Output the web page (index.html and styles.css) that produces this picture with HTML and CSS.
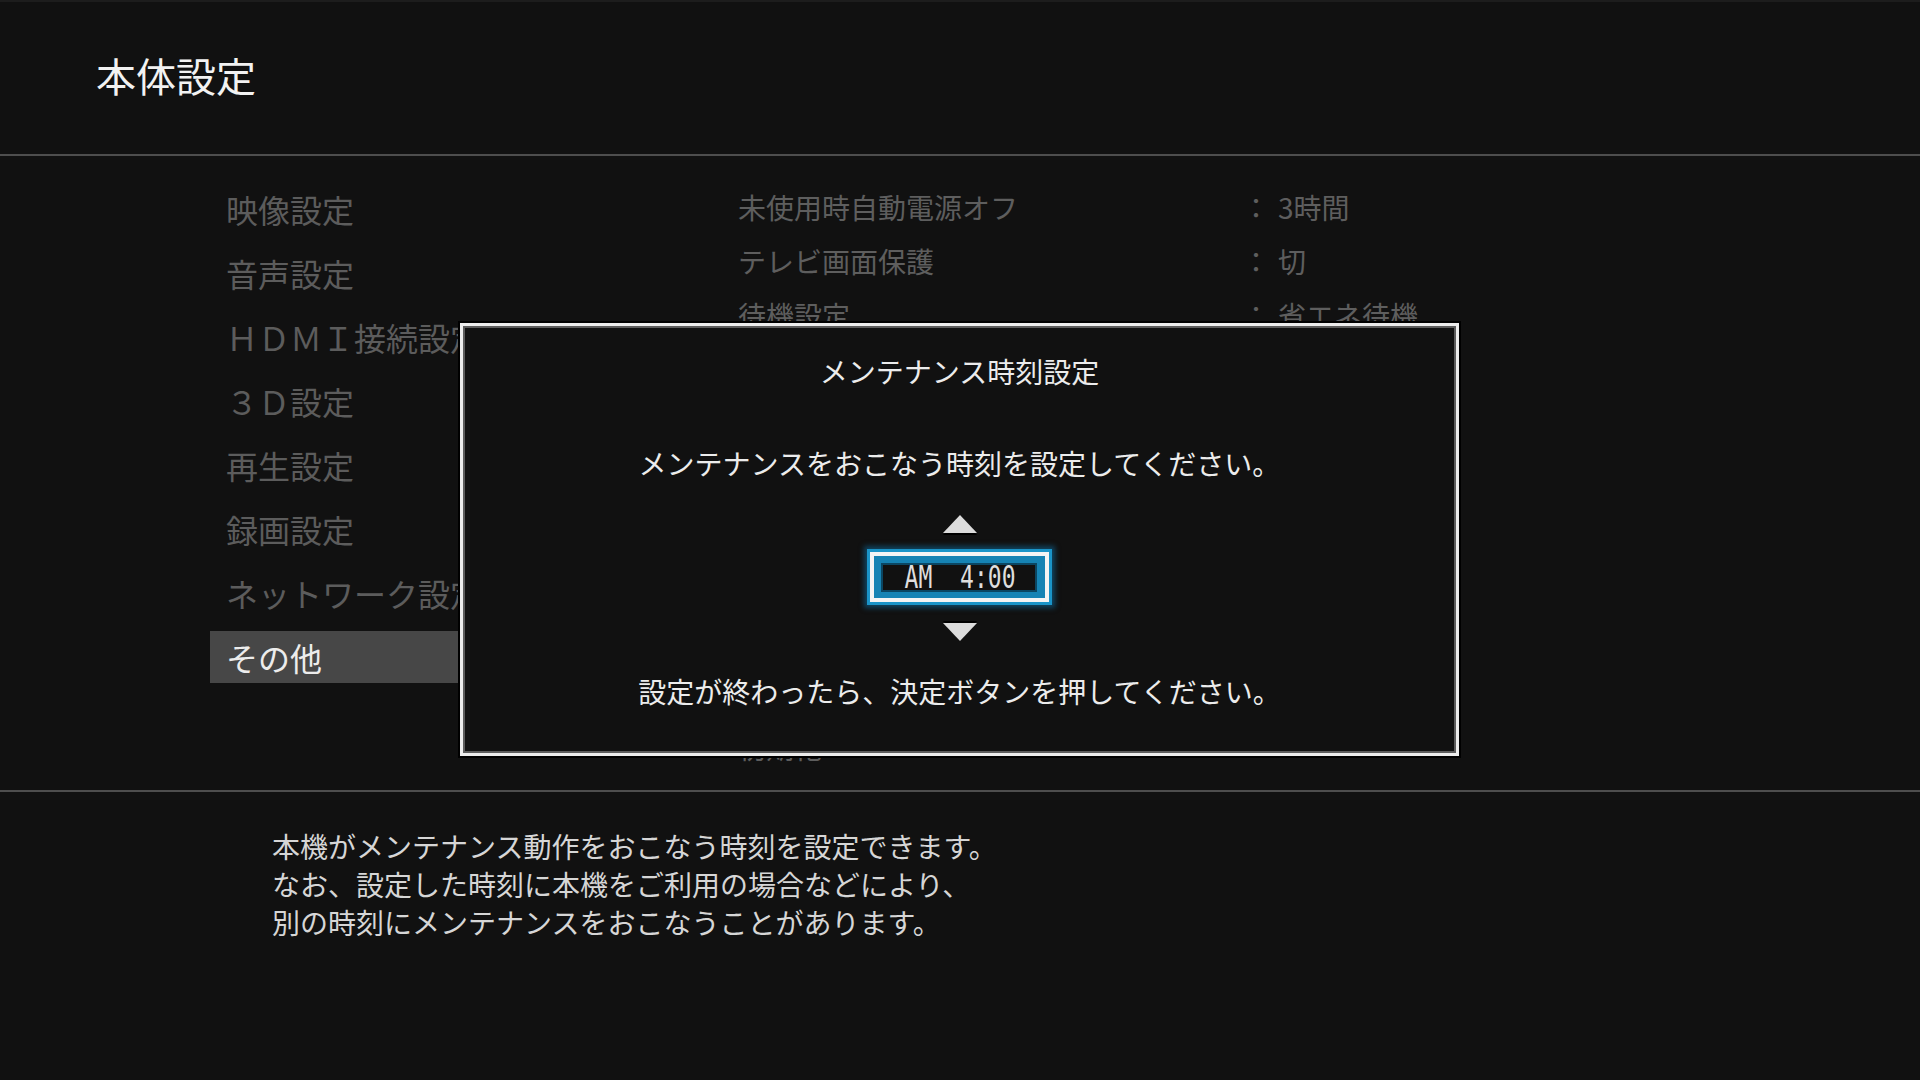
FILE: index.html
```html
<!DOCTYPE html>
<html lang="ja">
<head>
  <meta charset="UTF-8" />
  <title>本体設定</title>
  <link rel="stylesheet" href="styles.css">
</head>
<body>
  <div class="screen">
    <header class="header">
      <h1 class="title">本体設定</h1>
    </header>

    <main class="main">
      <ul class="menu">
        <li class="menu-item">映像設定</li>
        <li class="menu-item">音声設定</li>
        <li class="menu-item">ＨＤＭＩ接続設定</li>
        <li class="menu-item">３Ｄ設定</li>
        <li class="menu-item">再生設定</li>
        <li class="menu-item">録画設定</li>
        <li class="menu-item">ネットワーク設定</li>
        <li class="menu-item selected">その他</li>
      </ul>

      <div class="detail">
        <div class="row"><span class="row-label">未使用時自動電源オフ</span><span class="row-sep">：</span><span class="row-value">3時間</span></div>
        <div class="row"><span class="row-label">テレビ画面保護</span><span class="row-sep">：</span><span class="row-value">切</span></div>
        <div class="row"><span class="row-label">待機設定</span><span class="row-sep">：</span><span class="row-value">省エネ待機</span></div>
        <div class="row"><span class="row-label">メンテナンス時刻設定</span><span class="row-sep">：</span><span class="row-value">AM 4:00</span></div>
        <div class="row"><span class="row-label">ソフトウェア更新</span><span class="row-sep">：</span><span class="row-value">入</span></div>
        <div class="row"><span class="row-label">リモコン設定</span><span class="row-sep">：</span><span class="row-value">1</span></div>
        <div class="row"><span class="row-label">表示部の明るさ</span><span class="row-sep">：</span><span class="row-value">明</span></div>
        <div class="row"><span class="row-label">操作音</span><span class="row-sep">：</span><span class="row-value">入</span></div>
        <div class="row"><span class="row-label">機器情報</span></div>
        <div class="row"><span class="row-label">放送受信設定</span></div>
        <div class="row"><span class="row-label">初期化</span></div>
      </div>
    </main>

    <footer class="help">
      <p class="help-text">本機がメンテナンス動作をおこなう時刻を設定できます。<br>なお、設定した時刻に本機をご利用の場合などにより、<br>別の時刻にメンテナンスをおこなうことがあります。</p>
    </footer>

    <div class="dialog">
      <div class="dialog-title">メンテナンス時刻設定</div>
      <div class="dialog-msg">メンテナンスをおこなう時刻を設定してください。</div>

      <svg class="arrow arrow-up" width="36" height="20" viewBox="0 0 36 20">
        <polygon points="1,20 18,2 35,20" fill="#000" />
        <polygon points="1,18 18,0 35,18" fill="#dcdcdc" />
      </svg>

      <div class="time-box">
        <div class="time-inner"><span class="time-text">AM  4:00</span></div>
      </div>

      <svg class="arrow arrow-down" width="36" height="20" viewBox="0 0 36 20">
        <polygon points="1,0 18,18 35,0" fill="#000" />
        <polygon points="1,2 18,20 35,2" fill="#dcdcdc" />
      </svg>

      <div class="dialog-msg last">設定が終わったら、決定ボタンを押してください。</div>
    </div>
  </div>
</body>
</html>
```

FILE: styles.css
```css
body {
  margin: 0;
  background-color: #111;
  font-family: "Noto Sans CJK JP", "Noto Sans", sans-serif;
}

.screen {
  position: relative;
  width: 1920px;
  height: 1080px;
  overflow: hidden;
  background-color: #111;
}

.header {
  box-sizing: border-box;
  height: 156px;
  padding: 53px 0 0 96px;
  border-top: 2px solid #1d1d1d;
  border-bottom: 2px solid #4e4e4e;
}

.title {
  margin: 0;
  font-size: 40px;
  line-height: 40px;
  font-weight: normal;
  color: #f2f2f2;
}

.main {
  box-sizing: border-box;
  height: 636px;
  display: flex;
  gap: 58px;
  padding-left: 210px;
  border-bottom: 2px solid #4e4e4e;
}

.menu {
  list-style: none;
  margin: 0;
  padding: 27px 0 0 0;
  width: 470px;
  display: flex;
  flex-direction: column;
  gap: 12px;
}

.menu-item {
  height: 52px;
  padding-left: 16px;
  font-size: 32px;
  line-height: 52px;
  color: #5c5c5c;
  white-space: nowrap;
}

.menu-item.selected {
  background-color: #474747;
  color: #ececec;
}

.detail {
  padding-top: 24px;
}

.row {
  display: flex;
  height: 54px;
  font-size: 28px;
  line-height: 54px;
  color: #5e5e5e;
  white-space: nowrap;
}

.row-label { width: 504px; }
.row-sep { width: 36px; }

.help {
  padding: 35px 0 0 272px;
}

.help-text {
  margin: 0;
  font-size: 28px;
  line-height: 38px;
  color: #d6d6d6;
}

/* overlay dialog */
.dialog {
  position: absolute;
  left: 460px;
  top: 323px;
  box-sizing: border-box;
  width: 999px;
  height: 433px;
  padding-top: 24px;
  display: flex;
  flex-direction: column;
  align-items: center;
  background-color: #111;
  border: 3px solid #ececec;
  box-shadow: 0 0 0 2px #000, inset 0 0 0 2px #5c5c5c;
  color: #ececec;
}

.dialog-title {
  font-size: 28px;
  line-height: 42px;
}

.dialog-msg {
  margin-top: 50px;
  font-size: 28px;
  line-height: 42px;
}

.dialog-msg.last {
  margin-top: 29px;
}

.arrow { display: block; }
.arrow-up { margin-top: 31px; }
.arrow-down { margin-top: 19px; }

.time-box {
  margin-top: 17px;
  box-sizing: border-box;
  width: 179px;
  height: 50px;
  padding: 7px 8px 6px 7px;
  background-color: #1683b4;
  border: 4px solid #f4f4f4;
  box-shadow: 0 0 0 3px #1a94c8, 0 0 5px 6px rgba(14, 110, 160, 0.55);
}

.time-inner {
  box-sizing: border-box;
  height: 29px;
  border: 2px solid #0b4662;
  background-color: #111;
  text-align: center;
  overflow: visible;
}

.time-text {
  display: inline-block;
  font-family: "DejaVu Sans Mono", "Liberation Mono", monospace;
  font-size: 32px;
  line-height: 25px;
  color: #dedede;
  white-space: pre;
  transform: scaleX(0.72);
}
```
